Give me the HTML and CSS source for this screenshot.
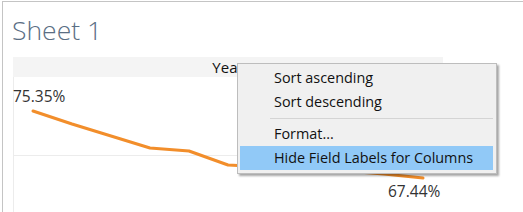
FILE: index.html
```html
<!DOCTYPE html>
<html>
<head>
<meta charset="utf-8">
<link rel="stylesheet" href="styles.css">
</head>
<body>
<div class="sheet">
  <div class="title">Sheet 1</div>
  <div class="view">
    <div class="header">Year</div>
    <svg class="chart" width="430" height="135" viewBox="0 0 430 135">
      <line x1="0.5" y1="0" x2="0.5" y2="135" stroke="#ececec" stroke-width="1"/>
      <line x1="0" y1="78.5" x2="430" y2="78.5" stroke="#ececec" stroke-width="1"/>
      <polyline fill="none" stroke="#f28e2b" stroke-width="3" stroke-linejoin="round" stroke-linecap="round"
        points="20,34 59,47 98,59 137,71 176,74 215,88 254,90 293,92 332,94 371,97 410,101"/>
      <text class="lbl" x="0" y="24.5">75.35%</text>
      <text class="lbl" x="375" y="119.5">67.44%</text>
    </svg>
  </div>
</div>
<div class="menu">
  <div class="item">Sort ascending</div>
  <div class="item">Sort descending</div>
  <div class="sep"></div>
  <div class="item">Format...</div>
  <div class="item active">Hide Field Labels for Columns</div>
</div>
</body>
</html>
```
FILE: styles.css
```css
html, body {
  margin: 0;
  padding: 0;
  background: #ffffff;
}
body {
  width: 523px;
  height: 212px;
  overflow: hidden;
  position: relative;
  font-family: "Open Sans", "Noto Sans", sans-serif;
}
.sheet {
  margin: 1px 0 0 2px;
  border-top: 1px solid #c4c4c4;
  border-left: 1px solid #c4c4c4;
  height: 211px;
  box-sizing: border-box;
  padding: 12px 0 0 10px;
}
.title {
  font-size: 26.5px;
  font-weight: 300;
  line-height: 32px;
  color: #5a6e84;
  height: 32px;
  margin-bottom: 11px;
  margin-left: -1px;
}
.view {
  width: 430px;
}
.header {
  height: 20px;
  line-height: 20px;
  background: #f4f4f4;
  text-align: center;
  font-size: 15px;
  color: #111;
}
.chart {
  display: block;
}
.lbl {
  font-family: "Open Sans", "Noto Sans", sans-serif;
  font-size: 15.5px;
  fill: #333;
}
.menu {
  position: absolute;
  left: 237px;
  top: 63px;
  width: 260px;
  box-sizing: border-box;
  background: #f0f0f0;
  border: 1px solid #bdbdbd;
  padding: 2px 0 3px 0;
  box-shadow: 2px 2px 2px rgba(0, 0, 0, 0.35);
  font-size: 14.4px;
  color: #111;
}
.item {
  height: 24px;
  line-height: 24px;
  margin: 0 3px 0 2px;
  padding-left: 34px;
  white-space: nowrap;
}
.item.active {
  background: #91c9f7;
}
.sep {
  height: 1px;
  background: #d4d4d4;
  margin: 4px 3px 3px 32px;
}
```
